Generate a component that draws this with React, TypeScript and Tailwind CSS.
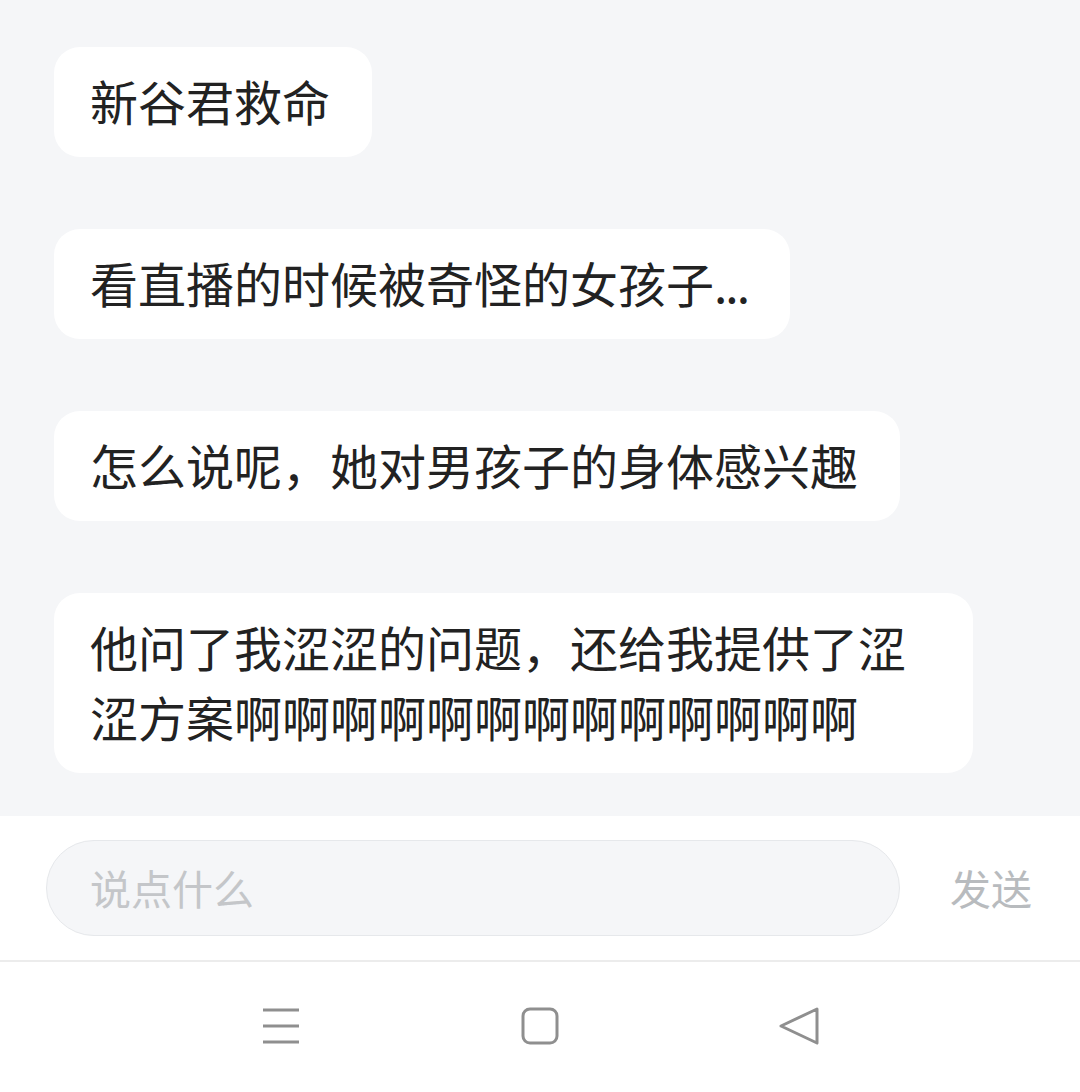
import React from "react";

const messages: React.ReactNode[] = [
  "新谷君救命",
  <>
    看直播的时候被奇怪的女孩子<span className="tracking-[-2px]">...</span>
  </>,
  "怎么说呢，她对男孩子的身体感兴趣",
  "他问了我涩涩的问题，还给我提供了涩涩方案啊啊啊啊啊啊啊啊啊啊啊啊啊",
];

export default function App() {
  return (
    <div
      className="w-[1080px] h-[1092px] flex flex-col bg-[#f5f6f8] overflow-hidden"
      style={{ fontFamily: '"Noto Sans CJK SC", "Noto Sans", sans-serif' }}
    >
      <div className="flex-1 flex flex-col items-start gap-[72px] pt-[47px] px-[54px]">
        {messages.map((m, i) => (
          <div
            key={i}
            className="max-w-[919px] bg-white rounded-[26px] pl-[36px] pr-[42px] pt-[18px] pb-[22px] text-[48px] leading-[70px] text-[#222222] break-all"
          >
            {m}
          </div>
        ))}
      </div>
      <div className="h-[146px] shrink-0 bg-white flex items-center pl-[46px] pr-[48px] border-b-2 border-[#ececec]">
        <div className="w-[854px] h-[96px] rounded-full bg-[#f5f6f8] border border-[#e6e8eb] flex items-center pl-[43px] text-[41px] text-[#c4c6c9]">
          说点什么
        </div>
        <div className="flex-1 flex justify-end text-[41px] text-[#b8bbbe]">发送</div>
      </div>
      <div className="h-[130px] shrink-0 bg-white flex items-center justify-center">
        <div className="flex items-center gap-[199px] -mt-[2px]">
          <div className="w-[60px] flex justify-center">
            <svg width="40" height="38" viewBox="0 0 40 38">
              <g stroke="#8f8f8f" strokeWidth="3" strokeLinecap="butt">
                <line x1="2" y1="3" x2="38" y2="3" />
                <line x1="2" y1="19" x2="38" y2="19" />
                <line x1="2" y1="35" x2="38" y2="35" />
              </g>
            </svg>
          </div>
          <div className="w-[60px] flex justify-center">
            <svg width="38" height="38" viewBox="0 0 38 38">
              <rect x="2" y="2" width="34" height="34" rx="7" fill="none" stroke="#8f8f8f" strokeWidth="3" />
            </svg>
          </div>
          <div className="w-[60px] flex justify-center">
            <svg width="42" height="42" viewBox="0 0 42 42">
              <path d="M39 4 L3 21 L39 38 Z" fill="none" stroke="#8f8f8f" strokeWidth="3" strokeLinejoin="round" />
            </svg>
          </div>
        </div>
      </div>
    </div>
  );
}
